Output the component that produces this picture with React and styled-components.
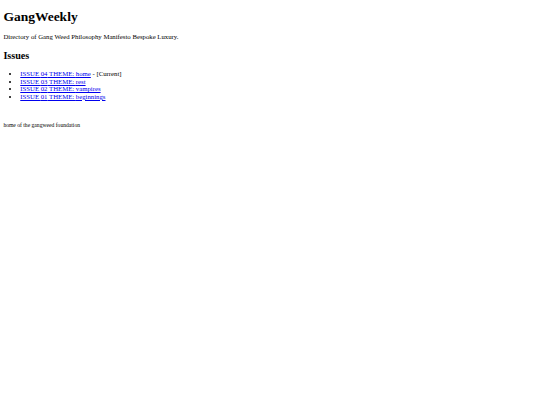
import React from 'react';
import styled, { createGlobalStyle } from 'styled-components';

// the reference is a 1280px wide page shrunk to 540px
const S = 540 / 1280;
const px = (n) => `${(n * S).toFixed(3)}px`;

const GlobalStyle = createGlobalStyle`
  html, body {
    background: #fff;
  }
  body {
    margin: ${px(8)};
    font-family: "Liberation Serif", "Times New Roman", serif;
    font-size: ${px(16)};
    color: #000;
  }
`;

const Title = styled.h1`
  font-size: ${px(32)};
  font-weight: bold;
  margin: 6px 0 8px;
`;

const Intro = styled.p`
  margin: 0;
`;

const SectionTitle = styled.h2`
  font-size: ${px(24)};
  font-weight: bold;
  margin: 9.4px 0;
`;

const IssueList = styled.ul`
  margin: 0;
  padding-left: ${px(40)};
  list-style: disc;
`;

const IssueItem = styled.li`
  line-height: ${px(18)};
`;

const IssueLink = styled.a`
  color: #0000ee;
  text-decoration: underline;
`;

const Footer = styled.footer`
  margin-top: 21px;
  font-size: ${px(13.33)};
`;

const issues = [
  { no: '04', theme: 'home', current: true },
  { no: '03', theme: 'rest' },
  { no: '02', theme: 'vampires' },
  { no: '01', theme: 'beginnings' },
];

export default function App() {
  return (
    <>
      <GlobalStyle />
      <Title>GangWeekly</Title>
      <Intro>Directory of Gang Weed Philosophy Manifesto Bespoke Luxury.</Intro>
      <SectionTitle>Issues</SectionTitle>
      <IssueList>
        {issues.map((issue) => (
          <IssueItem key={issue.no}>
            <IssueLink href="#">
              ISSUE {issue.no} THEME: {issue.theme}
            </IssueLink>
            {issue.current && ' - [Current]'}
          </IssueItem>
        ))}
      </IssueList>
      <Footer>home of the gangweed foundation</Footer>
    </>
  );
}
